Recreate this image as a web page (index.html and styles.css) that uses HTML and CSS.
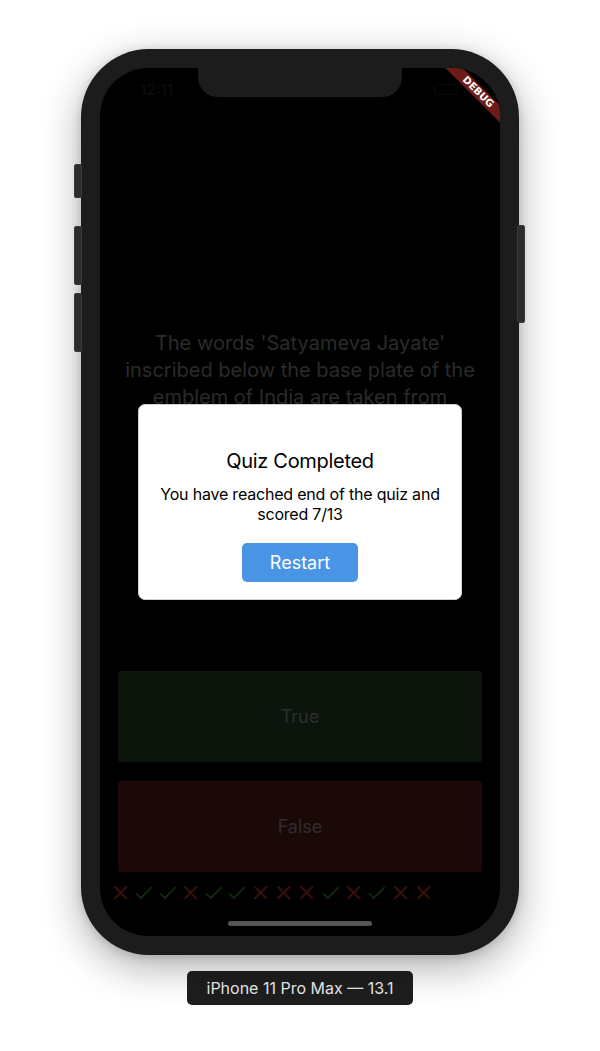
FILE: index.html
```html
<!DOCTYPE html>
<html>
<head>
<meta charset="utf-8">
<link rel="stylesheet" href="styles.css">
</head>
<body>
<div class="stage">
  <div class="phone">
    <div class="side-btn btn-a"></div>
    <div class="side-btn btn-b"></div>
    <div class="side-btn btn-c"></div>
    <div class="side-btn btn-power"></div>
    <div class="screen">
      <div class="notch"></div>
      <div class="status">
        <span class="time">12:11</span>
        <span class="battery"></span>
      </div>
      <div class="question">
        <p class="q-text">The words 'Satyameva Jayate' inscribed below the base plate of the emblem of India are taken from Mundaka Upanishad.</p>
      </div>
      <div class="answers">
        <div class="answer answer-true">True</div>
        <div class="answer answer-false">False</div>
      </div>
      <div class="scores">
        <svg class="ic ic-x" viewBox="0 0 24 24"><path d="M19 6.41L17.59 5 12 10.59 6.41 5 5 6.41 10.59 12 5 17.59 6.41 19 12 13.41 17.59 19 19 17.59 13.41 12z"/></svg>
        <svg class="ic ic-ok" viewBox="0 0 24 24"><path d="M9 16.17L4.83 12l-1.42 1.41L9 19 21 7l-1.41-1.41z"/></svg>
        <svg class="ic ic-ok" viewBox="0 0 24 24"><path d="M9 16.17L4.83 12l-1.42 1.41L9 19 21 7l-1.41-1.41z"/></svg>
        <svg class="ic ic-x" viewBox="0 0 24 24"><path d="M19 6.41L17.59 5 12 10.59 6.41 5 5 6.41 10.59 12 5 17.59 6.41 19 12 13.41 17.59 19 19 17.59 13.41 12z"/></svg>
        <svg class="ic ic-ok" viewBox="0 0 24 24"><path d="M9 16.17L4.83 12l-1.42 1.41L9 19 21 7l-1.41-1.41z"/></svg>
        <svg class="ic ic-ok" viewBox="0 0 24 24"><path d="M9 16.17L4.83 12l-1.42 1.41L9 19 21 7l-1.41-1.41z"/></svg>
        <svg class="ic ic-x" viewBox="0 0 24 24"><path d="M19 6.41L17.59 5 12 10.59 6.41 5 5 6.41 10.59 12 5 17.59 6.41 19 12 13.41 17.59 19 19 17.59 13.41 12z"/></svg>
        <svg class="ic ic-x" viewBox="0 0 24 24"><path d="M19 6.41L17.59 5 12 10.59 6.41 5 5 6.41 10.59 12 5 17.59 6.41 19 12 13.41 17.59 19 19 17.59 13.41 12z"/></svg>
        <svg class="ic ic-x" viewBox="0 0 24 24"><path d="M19 6.41L17.59 5 12 10.59 6.41 5 5 6.41 10.59 12 5 17.59 6.41 19 12 13.41 17.59 19 19 17.59 13.41 12z"/></svg>
        <svg class="ic ic-ok" viewBox="0 0 24 24"><path d="M9 16.17L4.83 12l-1.42 1.41L9 19 21 7l-1.41-1.41z"/></svg>
        <svg class="ic ic-x" viewBox="0 0 24 24"><path d="M19 6.41L17.59 5 12 10.59 6.41 5 5 6.41 10.59 12 5 17.59 6.41 19 12 13.41 17.59 19 19 17.59 13.41 12z"/></svg>
        <svg class="ic ic-ok" viewBox="0 0 24 24"><path d="M9 16.17L4.83 12l-1.42 1.41L9 19 21 7l-1.41-1.41z"/></svg>
        <svg class="ic ic-x" viewBox="0 0 24 24"><path d="M19 6.41L17.59 5 12 10.59 6.41 5 5 6.41 10.59 12 5 17.59 6.41 19 12 13.41 17.59 19 19 17.59 13.41 12z"/></svg>
        <svg class="ic ic-x" viewBox="0 0 24 24"><path d="M19 6.41L17.59 5 12 10.59 6.41 5 5 6.41 10.59 12 5 17.59 6.41 19 12 13.41 17.59 19 19 17.59 13.41 12z"/></svg>
      </div>
      <div class="home-indicator"></div>
      <div class="overlay">
        <div class="dialog">
          <h2 class="dlg-title">Quiz Completed</h2>
          <p class="dlg-body">You have reached end of the quiz and scored 7/13</p>
          <div class="dlg-btn">Restart</div>
        </div>
      </div>
      <div class="debug-banner">DEBUG</div>
    </div>
  </div>
  <div class="device-label">iPhone 11 Pro Max — 13.1</div>
</div>
</body>
</html>
```

FILE: styles.css
```css
* { box-sizing: border-box; }
html, body { margin: 0; padding: 0; background: #ffffff; }
body {
  width: 600px;
  height: 1051px;
  overflow: hidden;
  font-family: Inter, "Liberation Sans", sans-serif;
}
.stage {
  display: flex;
  flex-direction: column;
  align-items: center;
  padding-top: 49px;
}
.phone {
  position: relative;
  width: 438px;
  height: 906px;
  border-radius: 68px;
  background: #1c1c1c;
  padding: 19px;
  box-shadow: 0 12px 40px rgba(0, 0, 0, 0.32), 0 2px 10px rgba(0, 0, 0, 0.15);
}
.side-btn {
  position: absolute;
  width: 8px;
  background: #2c2c2c;
  border: 1px solid #3a3a3a;
  border-radius: 2px;
}
.btn-a { left: -7px; top: 115px; height: 34px; }
.btn-b { left: -7px; top: 177px; height: 59px; }
.btn-c { left: -7px; top: 244px; height: 59px; }
.btn-power { right: -6px; top: 176px; height: 98px; }
.screen {
  position: relative;
  width: 400px;
  height: 868px;
  border-radius: 48px;
  background: #000;
  overflow: hidden;
  display: flex;
  flex-direction: column;
}
.notch {
  position: absolute;
  left: 98px;
  top: 0;
  width: 204px;
  height: 29px;
  background: #1c1c1c;
  border-radius: 0 0 20px 20px;
}
.status {
  height: 44px;
  flex: none;
  display: flex;
  justify-content: space-between;
  align-items: flex-start;
  padding: 12px 42px 0 40px;
}
.time {
  font-size: 15px;
  font-weight: 600;
  color: #0b0b0b;
}
.battery {
  margin-top: 4px;
  width: 24px;
  height: 11px;
  border: 1px solid #0a0a0a;
  border-radius: 3px;
}
.question {
  height: 544px;
  flex: none;
  display: flex;
  align-items: center;
  justify-content: center;
  padding: 10px;
}
.q-text {
  margin: 0;
  max-width: 370px;
  text-align: center;
  font-size: 20px;
  line-height: 27px;
  color: #2b2b2b;
}
.answers {
  flex: none;
  display: flex;
  flex-direction: column;
  gap: 19px;
  padding: 15px 18px 0;
}
.answer {
  height: 91px;
  border-radius: 2px;
  display: flex;
  align-items: center;
  justify-content: center;
  font-size: 18px;
  color: #2e2e2e;
}
.answer-true { background: #0b150c; }
.answer-false { background: #1a0907; }
.scores {
  flex: none;
  display: flex;
  padding: 9px 0 0 9px;
}
.ic {
  width: 23.3px;
  height: 23.3px;
}
.ic-x { fill: #3b0f0b; }
.ic-ok { fill: #10290f; }
.home-indicator {
  position: absolute;
  left: 128px;
  bottom: 10px;
  width: 144px;
  height: 5px;
  border-radius: 3px;
  background: #555555;
}
.overlay {
  position: absolute;
  inset: 0;
  display: flex;
  align-items: center;
  justify-content: center;
}
.dialog {
  width: 324px;
  height: 196px;
  background: #ffffff;
  border-radius: 7px;
  border: 1px solid #d0d4da;
  display: flex;
  flex-direction: column;
  align-items: center;
  padding: 44px 8px 0;
}
.dlg-title {
  margin: 0;
  font-size: 20px;
  line-height: 24px;
  font-weight: 400;
  letter-spacing: -0.3px;
  color: #000;
}
.dlg-body {
  margin: 11px 0 0;
  font-size: 16px;
  line-height: 20px;
  letter-spacing: -0.2px;
  text-align: center;
  color: #000;
  max-width: 300px;
}
.dlg-btn {
  margin-top: 19px;
  width: 116px;
  height: 39px;
  border-radius: 5px;
  background: #4a94e6;
  color: #fff;
  font-size: 18px;
  display: flex;
  align-items: center;
  justify-content: center;
}
.debug-banner {
  position: absolute;
  left: 318px;
  top: 18px;
  width: 120px;
  height: 12px;
  background: #701c16;
  color: #fff;
  font-family: "DejaVu Sans", sans-serif;
  font-weight: 700;
  font-size: 10px;
  line-height: 12px;
  text-align: center;
  transform: rotate(45deg);
}
.device-label {
  margin-top: 16px;
  width: 226px;
  height: 34px;
  border-radius: 5px;
  background: #1e1e1e;
  color: #ececec;
  font-size: 16px;
  display: flex;
  align-items: center;
  justify-content: center;
}
```
